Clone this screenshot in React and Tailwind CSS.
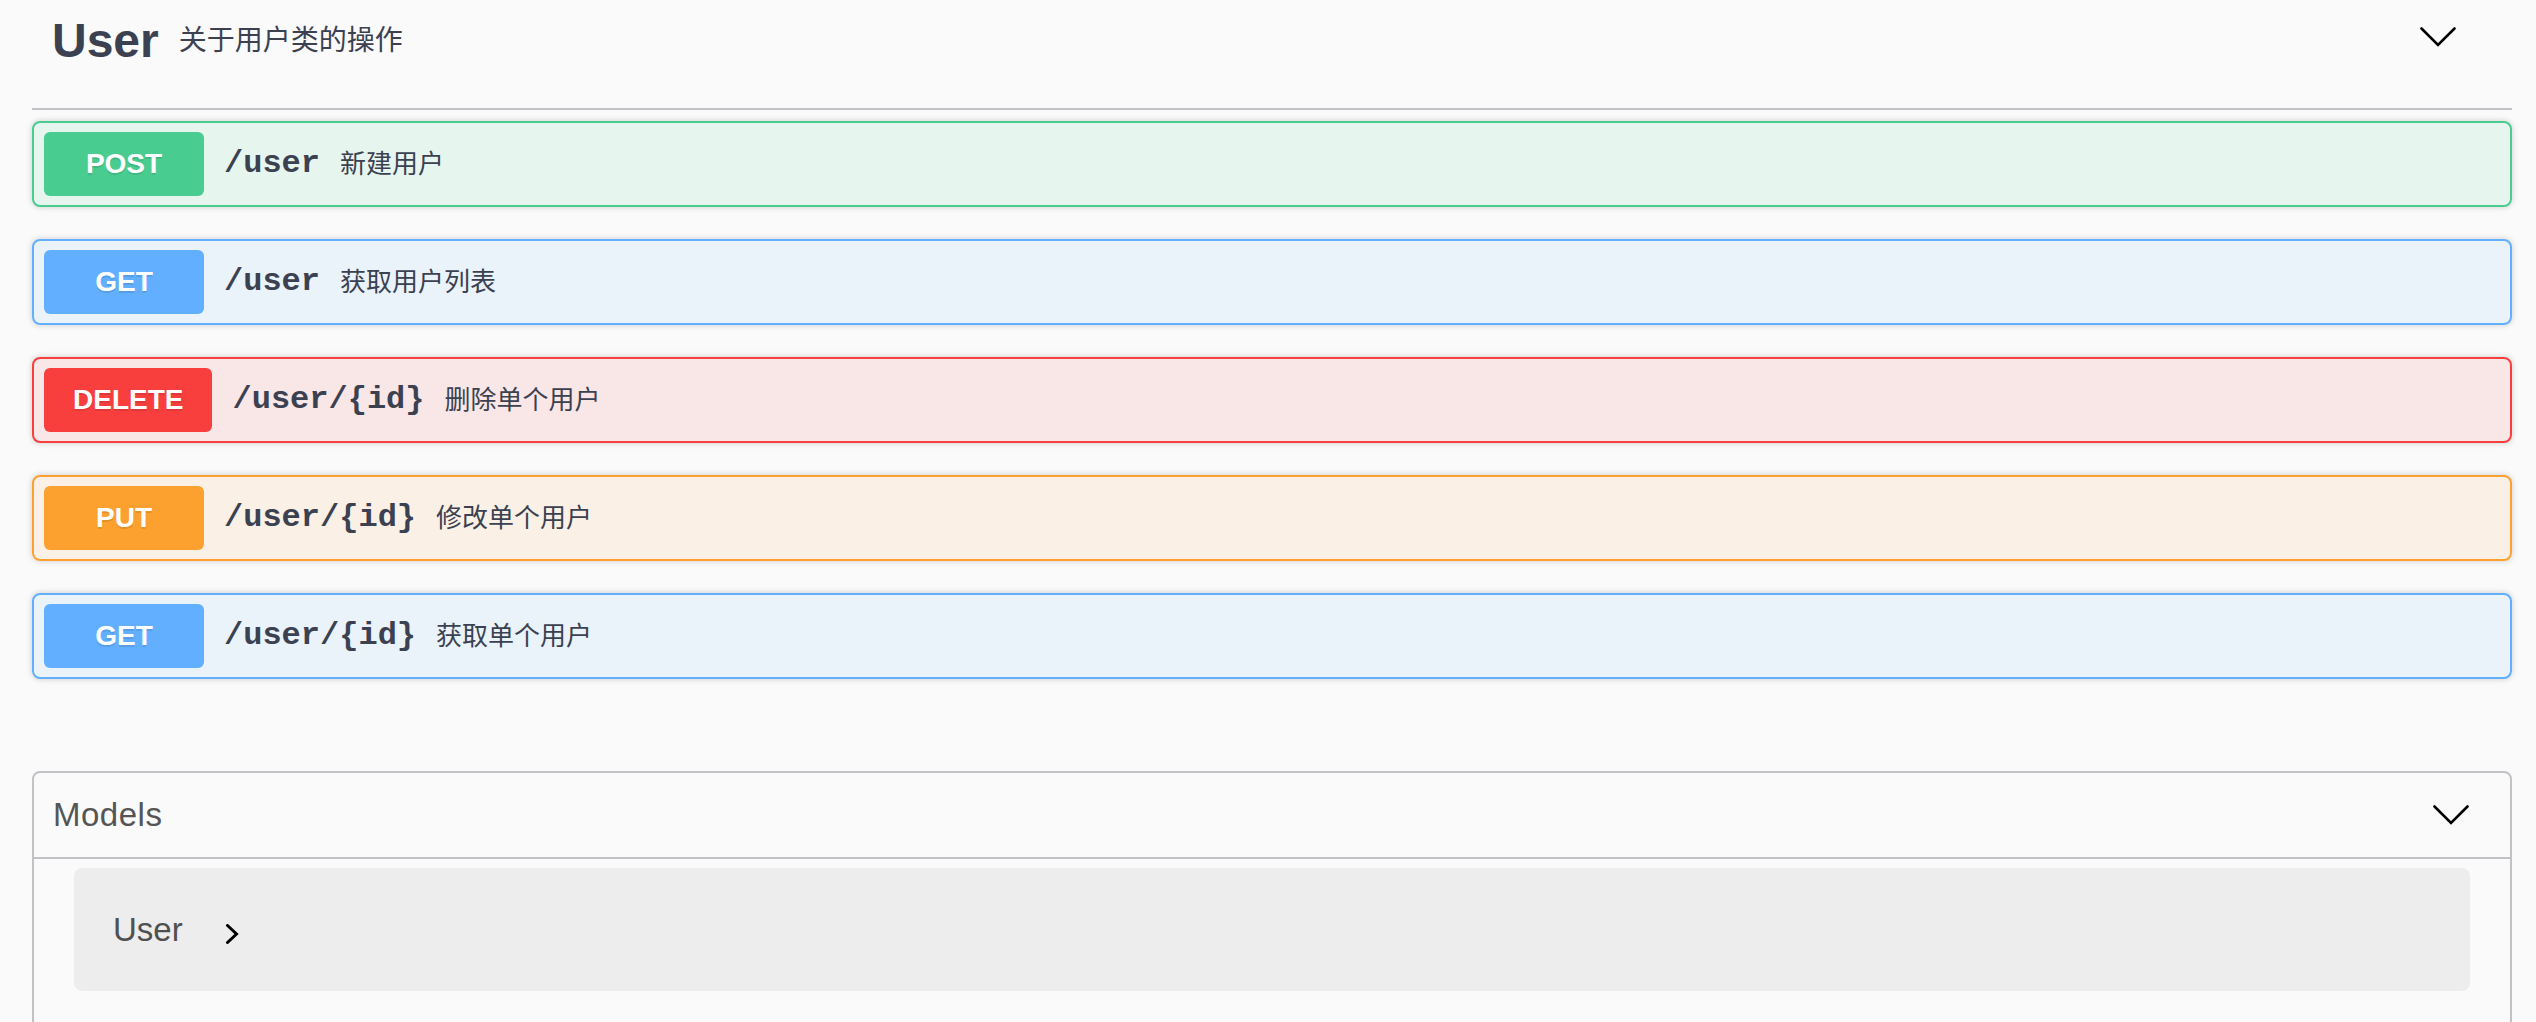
import React from "react";

const SANS = "font-['Liberation_Sans','Noto_Sans_CJK_SC',sans-serif]";

const ops = [
  { m: "POST", path: "/user", desc: "新建用户", border: "border-[#49cc90]", bg: "bg-[rgba(73,204,144,0.1)]", badge: "bg-[#49cc90]" },
  { m: "GET", path: "/user", desc: "获取用户列表", border: "border-[#61affe]", bg: "bg-[rgba(97,175,254,0.1)]", badge: "bg-[#61affe]" },
  { m: "DELETE", path: "/user/{id}", desc: "删除单个用户", border: "border-[#f93e3e]", bg: "bg-[rgba(249,62,62,0.1)]", badge: "bg-[#f93e3e]" },
  { m: "PUT", path: "/user/{id}", desc: "修改单个用户", border: "border-[#fca130]", bg: "bg-[rgba(252,161,48,0.1)]", badge: "bg-[#fca130]" },
  { m: "GET", path: "/user/{id}", desc: "获取单个用户", border: "border-[#61affe]", bg: "bg-[rgba(97,175,254,0.1)]", badge: "bg-[#61affe]" },
];

function ChevronDown({ className }) {
  return (
    <svg className={className} width="36" height="20" viewBox="0 0 36 20" fill="none">
      <polyline points="1.5,1.5 18,18 34.5,1.5" stroke="#000" strokeWidth="2.6" strokeLinecap="round" strokeLinejoin="miter" />
    </svg>
  );
}

function ChevronRight({ className }) {
  return (
    <svg className={className} width="14" height="20" viewBox="0 0 14 20" fill="none">
      <polyline points="2.5,1.5 11.5,10 2.5,18.5" stroke="#000" strokeWidth="3" strokeLinecap="round" />
    </svg>
  );
}

function Op({ op }) {
  return (
    <div className={`flex items-center h-[86px] border-2 rounded-[8px] px-[10px] py-[9px] shadow-[0_0_6px_rgba(0,0,0,0.19)] ${op.border} ${op.bg}`}>
      <div className={`h-[64px] min-w-[160px] px-[29px] flex items-center justify-center rounded-[6px] text-white font-bold text-[28px] [text-shadow:0_2px_0_rgba(0,0,0,0.1)] ${SANS} ${op.badge}`}>
        {op.m}
      </div>
      <span className="px-[20px] font-['Liberation_Mono',monospace] font-bold text-[32px] text-[#3b4151]">{op.path}</span>
      <span className={`text-[26px] text-[#3b4151] ${SANS}`}>{op.desc}</span>
    </div>
  );
}

export default function App() {
  return (
    <div className={`min-h-[1022px] bg-[#fafafa] pl-[32px] pr-[24px] ${SANS}`}>
      <div className="flex items-center h-[110px] pb-[26px] pl-[20px] pr-[56px] border-b-2 border-[rgba(59,65,81,0.3)]">
        <span className="text-[48px] leading-[48px] font-bold text-[#3b4151]">User</span>
        <span className="flex-1 px-[20px] text-[28px] text-[#3b4151]">关于用户类的操作</span>
        <ChevronDown className="mb-[8px]" />
      </div>
      <div className="mt-[11px] flex flex-col gap-[32px]">
        {ops.map((op, i) => (
          <Op key={i} op={op} />
        ))}
      </div>
      <div className="mt-[92px] border-2 border-[rgba(59,65,81,0.3)] rounded-[8px] pb-[40px]">
        <div className="flex items-center h-[86px] pl-[19px] pr-[41px] border-b-2 border-[rgba(59,65,81,0.3)]">
          <span className="flex-1 text-[33px] tracking-[0.5px] text-[#555555]">Models</span>
          <ChevronDown />
        </div>
        <div className="mt-[9px] mx-[40px] h-[123px] rounded-[8px] bg-[rgba(0,0,0,0.05)] flex items-center pl-[39px]">
          <span className="text-[33px] text-[#505050]">User</span>
          <ChevronRight className="ml-[42px] mt-[8px]" />
        </div>
      </div>
    </div>
  );
}
